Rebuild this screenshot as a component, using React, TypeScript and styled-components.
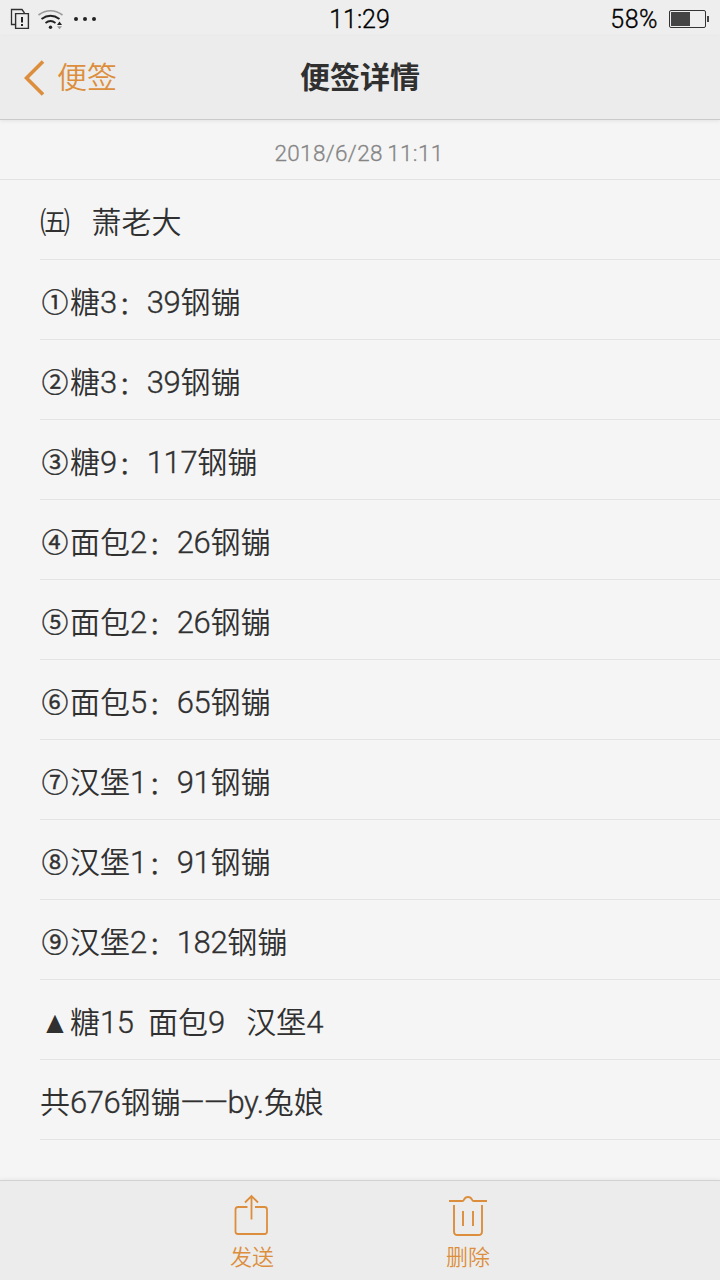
import React from "react";
import styled, { createGlobalStyle } from "styled-components";

const GlobalStyle = createGlobalStyle`
  * { box-sizing: border-box; }
  body {
    margin: 0;
    background: #f5f5f5;
    font-family: Roboto, "Noto Sans CJK SC", sans-serif;
    color: #303030;
  }
`;

const Screen = styled.div`
  width: 720px;
  height: 1280px;
  display: flex;
  flex-direction: column;
  overflow: hidden;
`;

const StatusBar = styled.div`
  height: 36px;
  flex: none;
  display: grid;
  grid-template-columns: 1fr auto 1fr;
  align-items: center;
  padding: 2px 11px 0 10px;
  background: #eeeeee;
  color: #000;
  font-size: 25px;
  font-weight: 350;
  line-height: 34px;
`;

const StatusIcons = styled.div`
  display: flex;
  align-items: center;
`;

const StatusText = styled.div`
  padding-top: 2px;
  line-height: 32px;
  -webkit-text-stroke: 0.35px currentColor;
`;

const Power = styled.div`
  display: flex;
  justify-content: flex-end;
  align-items: center;
  gap: 11px;
  letter-spacing: 0.5px;
`;

const NavBar = styled.header`
  position: relative;
  z-index: 1;
  height: 84px;
  flex: none;
  display: grid;
  grid-template-columns: 1fr auto 1fr;
  align-items: center;
  padding: 1px 24px 0;
  background: #ececec;
  border-bottom: 1px solid #cacaca;
  box-shadow: 0 1px 4px rgba(0, 0, 0, 0.08);
`;

const BackButton = styled.div`
  display: flex;
  align-items: center;
  gap: 12px;
  font-size: 30px;
  font-weight: 350;
  line-height: 40px;
  color: #dc8e3c;
`;

const Title = styled.h1`
  margin: 0;
  font-size: 30px;
  font-weight: 700;
  line-height: 40px;
`;

const DateLine = styled.div`
  height: 60px;
  flex: none;
  border-bottom: 1px solid #e2e2e2;
  text-align: center;
  font-size: 22.5px;
  font-weight: 350;
  line-height: 66px;
  letter-spacing: 0.35px;
  word-spacing: -1.5px;
  padding-right: 2px;
  color: #858585;
  -webkit-text-stroke: 0.3px currentColor;
`;

const Note = styled.main`
  flex: 1;
  padding-left: 40px;
`;

const Line = styled.p`
  height: 80px;
  margin: 0;
  border-bottom: 1px solid #e4e4e4;
  font-size: 30px;
  font-weight: 350;
  line-height: 86px;
  white-space: pre;
`;

const Latin = styled.span`
  font-size: 31px;
  line-height: 1;
  letter-spacing: -0.4px;
  -webkit-text-stroke: 0.35px currentColor;
`;

const Circled = styled.span`
  display: inline-block;
  width: 30px;
  text-align: center;
  font-size: 26.5px;
  font-weight: 350;
  line-height: 1;
  vertical-align: 1px;
  -webkit-text-stroke: 0.5px currentColor;
`;

const Triangle = styled.span`
  display: inline-block;
  width: 30px;
  text-align: center;
  font-size: 20px;
  line-height: 1;
  vertical-align: 1px;
  transform: scale(0.92, 1.12);
`;

const Colon = styled.span`
  display: inline-block;
  width: 30px;
  padding-left: 2px;
  font-size: 24px;
  line-height: 1;
  vertical-align: -1px;
  -webkit-text-stroke: 0.4px currentColor;
`;

const Toolbar = styled.footer`
  height: 100px;
  flex: none;
  display: flex;
  justify-content: center;
  gap: 128px;
  padding-top: 11px;
  background: #ececec;
  border-top: 1px solid #d2d2d2;
  box-shadow: 0 -1px 4px rgba(0, 0, 0, 0.06);
`;

const ToolButton = styled.div`
  width: 88px;
  display: flex;
  flex-direction: column;
  align-items: center;
  font-size: 22px;
  line-height: 36px;
  font-weight: 350;
  color: #dc8e3c;
`;

const lines = [
  "㈤   萧老大",
  "①糖3：39钢镚",
  "②糖3：39钢镚",
  "③糖9：117钢镚",
  "④面包2：26钢镚",
  "⑤面包2：26钢镚",
  "⑥面包5：65钢镚",
  "⑦汉堡1：91钢镚",
  "⑧汉堡1：91钢镚",
  "⑨汉堡2：182钢镚",
  "▲糖15  面包9   汉堡4",
  "共676钢镚——by.兔娘",
];

const renderRuns = (text: string) =>
  text.split(/([①-⑨]|▲|：|[ \w.—]+)/).map((run, i) => {
    if (!run) return null;
    if (/^[①-⑨]$/.test(run)) return <Circled key={i}>{run}</Circled>;
    if (run === "▲") return <Triangle key={i}>{run}</Triangle>;
    if (run === "：") return <Colon key={i}>{run}</Colon>;
    if (/^[ \w.—]+$/.test(run)) return <Latin key={i}>{run}</Latin>;
    return <React.Fragment key={i}>{run}</React.Fragment>;
  });

const StatusGlyphs = () => (
  <svg width="90" height="34" viewBox="10 1 90 34" fill="none">
    <path d="M15.500 23.500h-4v-15h10.500l2.500 3.500" stroke="#303030" strokeWidth="1.300" />
    <path d="M15.600 12.600h12.800v14.800h-12.800z" stroke="#303030" strokeWidth="1.400" fill="#eee" />
    <path d="M22 16v5.500M22 23v2" stroke="#222" strokeWidth="2" />
    <path d="M38.500 14q12-8.500 24 0" stroke="#999" strokeWidth="1.600" />
    <path d="M41.500 18q9-6.500 18 0" stroke="#222" strokeWidth="1.900" />
    <path d="M45.500 22q5-4 10 0" stroke="#222" strokeWidth="1.700" />
    <circle cx="50.500" cy="26.200" r="1.700" fill="#222" />
    <path d="M57 24l2.500-3.500L62 24z" fill="#222" />
    <path d="M57 25.300h5l-2.500 3z" fill="#999" />
    <circle cx="76" cy="18" r="2" fill="#222" />
    <circle cx="85" cy="18" r="2" fill="#222" />
    <circle cx="94" cy="18" r="2" fill="#222" />
  </svg>
);

const Battery = () => (
  <svg width="40" height="20" viewBox="0 0 40 20">
    <rect x="0.500" y="1.500" width="36" height="17" rx="1.500" fill="none" stroke="#333" />
    <rect x="2" y="3" width="19" height="14" fill="#444" />
    <rect x="38" y="7" width="2" height="6" fill="#444" />
  </svg>
);

const BackArrow = () => (
  <svg width="21" height="36" viewBox="0 0 21 36" fill="none">
    <path d="M19 1.500L2.500 18L19 34.500" stroke="#dc8e3c" strokeWidth="3.600" />
  </svg>
);

const SendIcon = () => (
  <svg width="38" height="48" viewBox="0 0 38 48" fill="none" stroke="#dc8e3c" strokeWidth="1.800">
    <path d="M14.500 15H5Q2.500 15 2.500 17.500V39.500Q2.500 42 5 42H31.500Q34 42 34 39.500V17.500Q34 15 31.500 15H22" />
    <path d="M18.500 27.500V4M12 10.500L18.500 4L25 10.500" />
  </svg>
);

const TrashIcon = () => (
  <svg width="38" height="48" viewBox="0 0 38 48" fill="none" stroke="#dc8e3c" strokeWidth="1.900">
    <path d="M0 9H13.500C15.500 9 14.500 5 19 5S22.500 9 24.500 9H38" />
    <path d="M5 13V39.500Q5 43 8.500 43H29.500Q33 43 33 39.500V13" />
    <path d="M14 19V34M24 19V34" />
  </svg>
);

export default function App() {
  return (
    <Screen>
      <GlobalStyle />
      <StatusBar>
        <StatusIcons><StatusGlyphs /></StatusIcons>
        <StatusText>11:29</StatusText>
        <Power><StatusText>58%</StatusText><Battery /></Power>
      </StatusBar>
      <NavBar>
        <BackButton><BackArrow />便签</BackButton>
        <Title>便签详情</Title>
      </NavBar>
      <DateLine>2018/6/28 11:11</DateLine>
      <Note>
        {lines.map((text, i) => <Line key={i}>{renderRuns(text)}</Line>)}
      </Note>
      <Toolbar>
        <ToolButton><SendIcon />发送</ToolButton>
        <ToolButton><TrashIcon />删除</ToolButton>
      </Toolbar>
    </Screen>
  );
}
